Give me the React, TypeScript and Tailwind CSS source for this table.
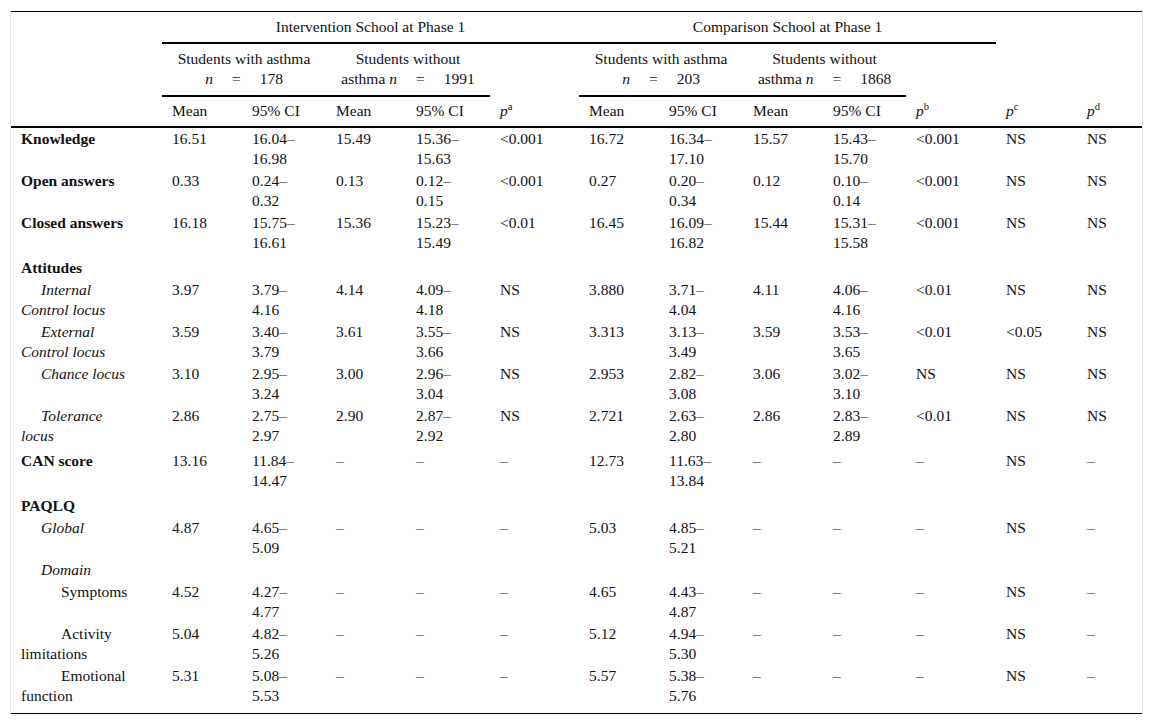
import React from "react";

type Row = {
  label: string[];
  kind: "bold" | "italic" | "plain";
  indent?: 0 | 1 | 2;
  group?: boolean;
  values?: string[];
};

const rows: Row[] = [
  { label: ["Knowledge"], kind: "bold", values: ["16.51", "16.04–16.98", "15.49", "15.36–15.63", "<0.001", "16.72", "16.34–17.10", "15.57", "15.43–15.70", "<0.001", "NS", "NS"] },
  { label: ["Open answers"], kind: "bold", values: ["0.33", "0.24–0.32", "0.13", "0.12–0.15", "<0.001", "0.27", "0.20–0.34", "0.12", "0.10–0.14", "<0.001", "NS", "NS"] },
  { label: ["Closed answers"], kind: "bold", values: ["16.18", "15.75–16.61", "15.36", "15.23–15.49", "<0.01", "16.45", "16.09–16.82", "15.44", "15.31–15.58", "<0.001", "NS", "NS"] },
  { label: ["Attitudes"], kind: "bold", group: true },
  { label: ["Internal", "Control locus"], kind: "italic", indent: 1, values: ["3.97", "3.79–4.16", "4.14", "4.09–4.18", "NS", "3.880", "3.71–4.04", "4.11", "4.06–4.16", "<0.01", "NS", "NS"] },
  { label: ["External", "Control locus"], kind: "italic", indent: 1, values: ["3.59", "3.40–3.79", "3.61", "3.55–3.66", "NS", "3.313", "3.13–3.49", "3.59", "3.53–3.65", "<0.01", "<0.05", "NS"] },
  { label: ["Chance locus"], kind: "italic", indent: 1, values: ["3.10", "2.95–3.24", "3.00", "2.96–3.04", "NS", "2.953", "2.82–3.08", "3.06", "3.02–3.10", "NS", "NS", "NS"] },
  { label: ["Tolerance", "locus"], kind: "italic", indent: 1, values: ["2.86", "2.75–2.97", "2.90", "2.87–2.92", "NS", "2.721", "2.63–2.80", "2.86", "2.83–2.89", "<0.01", "NS", "NS"] },
  { label: ["CAN score"], kind: "bold", group: true, values: ["13.16", "11.84–14.47", "–", "–", "–", "12.73", "11.63–13.84", "–", "–", "–", "NS", "–"] },
  { label: ["PAQLQ"], kind: "bold", group: true },
  { label: ["Global"], kind: "italic", indent: 1, values: ["4.87", "4.65–5.09", "–", "–", "–", "5.03", "4.85–5.21", "–", "–", "–", "NS", "–"] },
  { label: ["Domain"], kind: "italic", indent: 1 },
  { label: ["Symptoms"], kind: "plain", indent: 2, values: ["4.52", "4.27–4.77", "–", "–", "–", "4.65", "4.43–4.87", "–", "–", "–", "NS", "–"] },
  { label: ["Activity", "limitations"], kind: "plain", indent: 2, values: ["5.04", "4.82–5.26", "–", "–", "–", "5.12", "4.94–5.30", "–", "–", "–", "NS", "–"] },
  { label: ["Emotional", "function"], kind: "plain", indent: 2, values: ["5.31", "5.08–5.53", "–", "–", "–", "5.57", "5.38–5.76", "–", "–", "–", "NS", "–"] },
];

const colWidths = [151, 80, 84, 80, 84, 89, 80, 84, 80, 83, 90, 81, 65];

// split "a–b" ranges onto two lines the way the journal table wraps them
const Cell = ({ v }: { v: string }) => {
  const i = v.indexOf("–");
  if (i > 0 && i < v.length - 1) {
    return (
      <>
        {v.slice(0, i + 1)}
        <br />
        {v.slice(i + 1)}
      </>
    );
  }
  return <>{v}</>;
};

const P = ({ s }: { s: string }) => (
  <>
    <i>p</i>
    <sup className="text-[10.5px] -top-[6px]">{s}</sup>
  </>
);

const Eq = () => <span className="mx-[19px]">=</span>;

export default function App() {
  return (
    <div className="min-h-screen bg-white pt-[11px] text-[#111] font-['Liberation_Serif','Times_New_Roman',serif] text-[15.5px] leading-[20px]">
      <div className="mx-[10px] border-x border-[#e6e6e6]">
        <table className="w-full table-fixed border-collapse border-t border-b border-black">
          <colgroup>
            {colWidths.map((w, i) => (
              <col key={i} style={{ width: w }} />
            ))}
          </colgroup>
          <thead>
            <tr>
              <th rowSpan={3} className="border-b-2 border-black" />
              <th colSpan={5} className="border-b-2 border-black pt-[5px] pb-[5px] text-center font-normal">
                Intervention School at Phase 1
              </th>
              <th colSpan={5} className="border-b-2 border-black pt-[5px] pb-[5px] text-center font-normal">
                Comparison School at Phase 1
              </th>
              <th rowSpan={2} />
              <th rowSpan={2} />
            </tr>
            <tr>
              <th colSpan={2} className="border-b-2 border-black pt-[5px] pb-[6px] text-center font-normal">
                Students with asthma
                <br />
                <i>n</i>
                <Eq />
                178
              </th>
              <th colSpan={2} className="border-b-2 border-black pt-[5px] pb-[6px] text-center font-normal">
                Students without
                <br />
                asthma <i>n</i>
                <Eq />
                1991
              </th>
              <th />
              <th colSpan={2} className="border-b-2 border-black pt-[5px] pb-[6px] text-center font-normal">
                Students with asthma
                <br />
                <i>n</i>
                <Eq />
                203
              </th>
              <th colSpan={2} className="border-b-2 border-black pt-[5px] pb-[6px] text-center font-normal">
                Students without
                <br />
                asthma <i>n</i>
                <Eq />
                1868
              </th>
              <th />
            </tr>
            <tr className="[&>th]:border-b-2 [&>th]:border-black [&>th]:pl-[10px] [&>th]:pt-[4px] [&>th]:pb-[5px] [&>th]:text-left [&>th]:font-normal">
              <th>Mean</th>
              <th>95% CI</th>
              <th>Mean</th>
              <th>95% CI</th>
              <th>
                <P s="a" />
              </th>
              <th>Mean</th>
              <th>95% CI</th>
              <th>Mean</th>
              <th>95% CI</th>
              <th>
                <P s="b" />
              </th>
              <th>
                <P s="c" />
              </th>
              <th>
                <P s="d" />
              </th>
            </tr>
          </thead>
          <tbody>
            {rows.map((r, ri) => {
              const last = ri === rows.length - 1;
              const pad = r.group ? "pt-[4px] pb-[1px]" : last ? "pt-[1px] pb-[7px]" : "pt-[1px] pb-[1px]";
              const labelCls = [
                "pl-[10px] align-top",
                pad,
                r.kind === "bold" ? "font-bold" : r.kind === "italic" ? "italic" : "",
                r.indent === 1 ? "indent-[20px]" : r.indent === 2 ? "indent-[40px]" : "",
              ].join(" ");
              return (
                <tr key={ri}>
                  <td className={labelCls}>
                    {r.label.map((l, li) => (
                      <React.Fragment key={li}>
                        {li > 0 && <br />}
                        {l}
                      </React.Fragment>
                    ))}
                  </td>
                  {(r.values ?? Array(12).fill("")).map((v, vi) => (
                    <td key={vi} className={`pl-[10px] align-top ${pad}`}>
                      <Cell v={v} />
                    </td>
                  ))}
                </tr>
              );
            })}
          </tbody>
        </table>
      </div>
    </div>
  );
}
